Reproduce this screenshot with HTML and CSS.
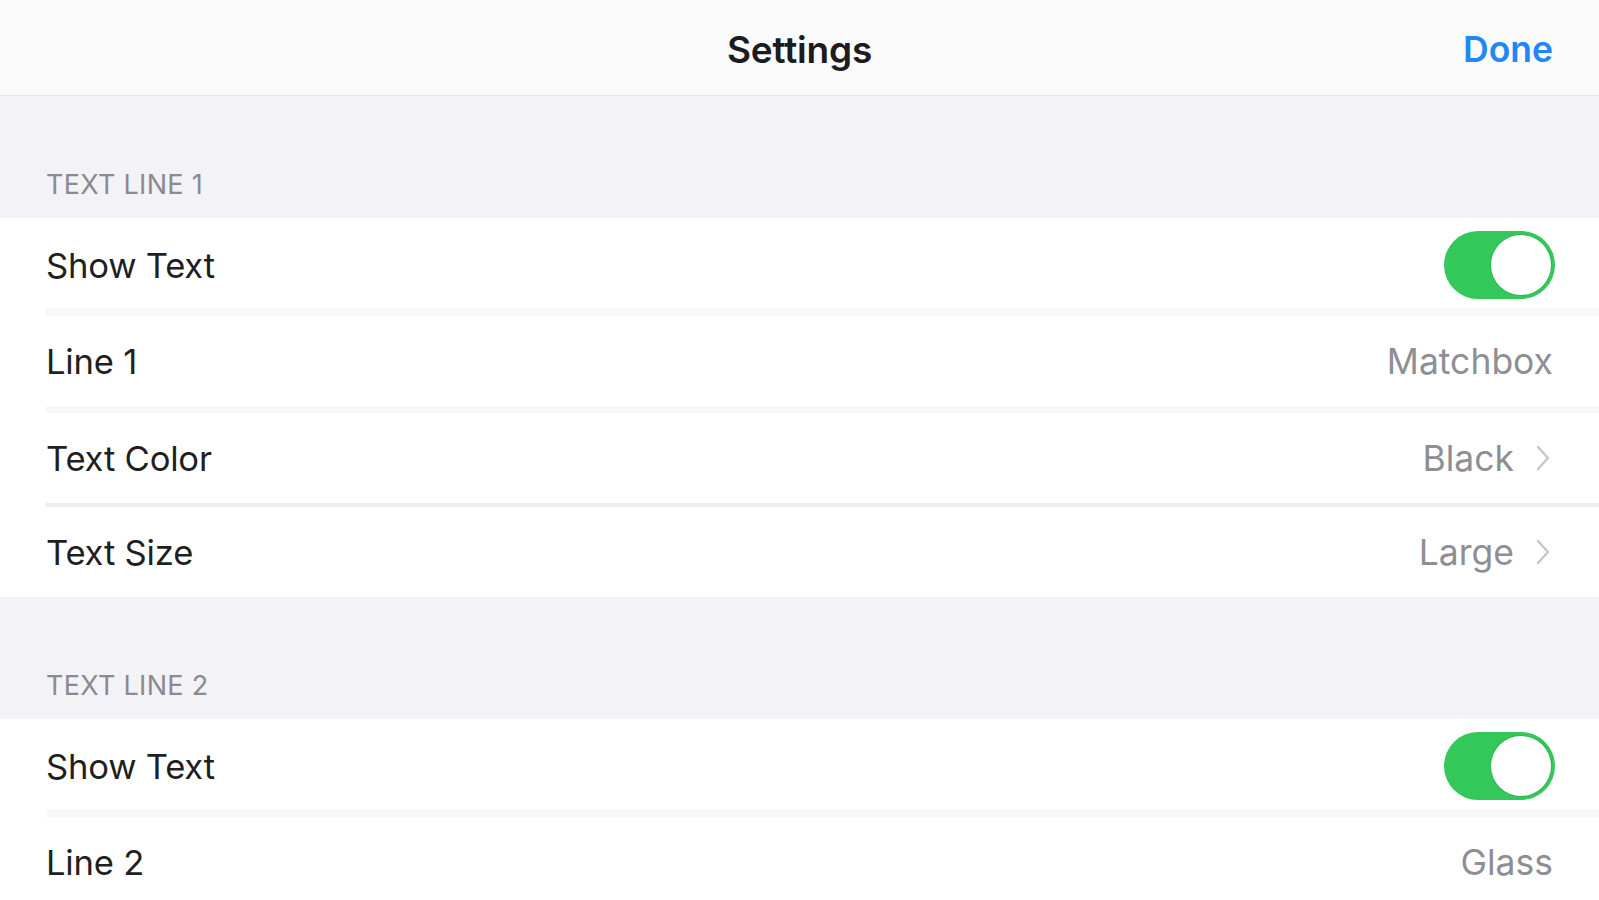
FILE: index.html
```html
<!DOCTYPE html>
<html lang="en">
<head>
<meta charset="utf-8">
<title>Settings</title>
<link rel="stylesheet" href="styles.css">
</head>
<body>
<div class="screen">
  <header class="navbar">
    <div class="nav-side"></div>
    <h1 class="nav-title">Settings</h1>
    <div class="nav-side nav-right"><span class="done">Done</span></div>
  </header>

  <section class="group">
    <div class="group-header"><span>TEXT LINE 1</span></div>
    <div class="group-body">
      <div class="row row-toggle">
        <span class="label">Show Text</span>
        <span class="toggle on"><span class="knob"></span></span>
      </div>
      <div class="sep sep-soft"></div>
      <div class="row">
        <span class="label">Line 1</span>
        <span class="value">Matchbox</span>
      </div>
      <div class="sep sep-soft sep-b"></div>
      <div class="row">
        <span class="label">Text Color</span>
        <span class="value">Black<svg class="chev" viewBox="0 0 16 28" width="16" height="28"><path d="M3 3 L13 14 L3 25" fill="none" stroke="#c7c7cb" stroke-width="2.4" stroke-linecap="round" stroke-linejoin="round"/></svg></span>
      </div>
      <div class="sep sep-thin"></div>
      <div class="row">
        <span class="label">Text Size</span>
        <span class="value">Large<svg class="chev" viewBox="0 0 16 28" width="16" height="28"><path d="M3 3 L13 14 L3 25" fill="none" stroke="#c7c7cb" stroke-width="2.4" stroke-linecap="round" stroke-linejoin="round"/></svg></span>
      </div>
    </div>
  </section>

  <section class="group">
    <div class="group-header"><span>TEXT LINE 2</span></div>
    <div class="group-body">
      <div class="row row-toggle">
        <span class="label">Show Text</span>
        <span class="toggle on"><span class="knob"></span></span>
      </div>
      <div class="sep sep-soft"></div>
      <div class="row">
        <span class="label">Line 2</span>
        <span class="value">Glass</span>
      </div>
    </div>
  </section>
</div>
</body>
</html>
```

FILE: styles.css
```css
* { box-sizing: border-box; }
html, body { margin: 0; padding: 0; }
body {
  background: #f2f2f7;
  font-family: Inter, "Liberation Sans", Arial, sans-serif;
  overflow: hidden;
  height: 900px;
}
.screen { width: 1599px; }

.navbar {
  height: 96px;
  background: #fafafb;
  border-bottom: 1px solid #e6e6e9;
  display: flex;
  align-items: center;
  padding: 4px 46px 0;
}
.nav-side { flex: 1; display: flex; }
.nav-right { justify-content: flex-end; }
.nav-title {
  margin: 0;
  font-size: 37px;
  font-weight: 600;
  color: #1c1c1e;
  letter-spacing: -0.2px;
}
.done {
  font-size: 35.5px;
  font-weight: 600;
  color: #2186f8;
}

.group-header {
  height: 122px;
  display: flex;
  align-items: flex-end;
  padding: 0 46px 17px;
}
.group-header span {
  font-size: 27px;
  line-height: 32px;
  color: #8a8a8f;
  letter-spacing: 0.3px;
}
.group-body { background: #ffffff; }

.row {
  height: 90px;
  display: flex;
  align-items: center;
  justify-content: space-between;
  padding: 0 46px 0 46px;
}
.row-toggle { padding-top: 4px; }
.label {
  font-size: 34.6px;
  color: #1f1f21;
  letter-spacing: -0.2px;
}
.value {
  font-size: 35.5px;
  color: #8e8e93;
  display: flex;
  align-items: center;
  gap: 21px;
}
.chev { display: block; margin-right: 2px; }

.sep { margin-left: 46px; }
.sep-soft { height: 8px; background: #f8f8f9; }
.sep-b { height: 7px; }
.sep-thin { height: 4px; background: #ededf0; }

.toggle {
  width: 111px;
  height: 68px;
  border-radius: 34px;
  background: #34c759;
  position: relative;
  margin-right: -2px;
}
.knob {
  position: absolute;
  top: 4px;
  right: 4px;
  width: 60px;
  height: 60px;
  border-radius: 50%;
  background: #ffffff;
  box-shadow: 0 0 0 1px rgba(40, 160, 70, 0.35);
}
```
